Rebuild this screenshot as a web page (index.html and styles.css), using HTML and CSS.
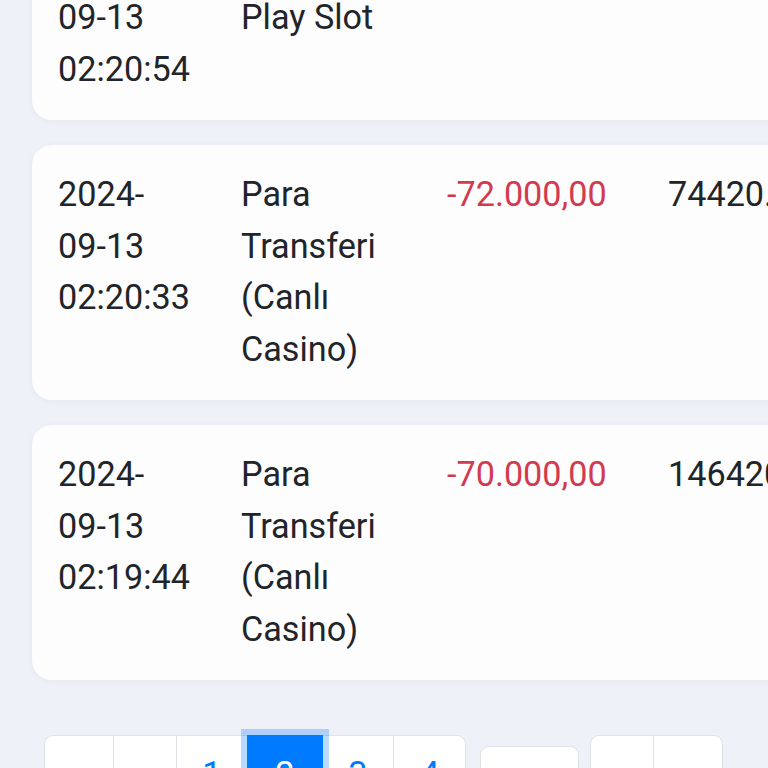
FILE: index.html
```html
<!DOCTYPE html>
<html lang="tr">
<head>
    <meta charset="UTF-8">
    <meta name="viewport" content="width=device-width, initial-scale=1.0">
    <title>Hesap Hareketleri</title>
    <link rel="stylesheet" href="styles.css">
</head>
<body>
    <div class="history">
        <div class="tx-card">
            <div class="tx-date">2024-<br>09-13<br>02:20:54</div>
            <div class="tx-desc">Pragmatic Play Slot</div>
            <div class="tx-amount">-2.000,00</div>
            <div class="tx-balance">72420.00</div>
        </div>

        <div class="tx-card">
            <div class="tx-date">2024-<br>09-13<br>02:20:33</div>
            <div class="tx-desc">Para Transferi (Canlı Casino)</div>
            <div class="tx-amount negative">-72.000,00</div>
            <div class="tx-balance">74420.00</div>
        </div>

        <div class="tx-card">
            <div class="tx-date">2024-<br>09-13<br>02:19:44</div>
            <div class="tx-desc">Para Transferi (Canlı Casino)</div>
            <div class="tx-amount negative">-70.000,00</div>
            <div class="tx-balance">146420.00</div>
        </div>

        <nav class="pager">
            <ul class="page-group">
                <li class="page-link">«</li>
                <li class="page-link">‹</li>
                <li class="page-link">1</li>
                <li class="page-link active">2</li>
                <li class="page-link">3</li>
                <li class="page-link">4</li>
            </ul>
            <div class="page-jump">...</div>
            <ul class="page-group">
                <li class="page-link">›</li>
                <li class="page-link">»</li>
            </ul>
        </nav>
    </div>
</body>
</html>
```

FILE: styles.css
```css
html, body { margin: 0; height: 100%; overflow: hidden; }
body { font-family: Roboto, "Liberation Sans", sans-serif; font-size: 34.2px; line-height: 51.4px; color: #212529; background: #eff1f8; }

/* page is scrolled down a little, so the first card starts above the fold */
.history { margin-top: -84px; padding-left: 32px; }

.tx-card { width: 900px; box-sizing: border-box; display: grid; grid-template-columns: 157px 180px 195px auto; column-gap: 26px; align-items: start; padding: 24.8px 26px; margin-bottom: 24.8px; background: #fdfdfe; border-radius: 20px; box-shadow: 0 1px 6px rgba(60, 70, 110, 0.06); }
.tx-amount { color: #000; }
.tx-amount.negative { color: #d23a4f; }
.tx-balance { white-space: nowrap; }

.pager { display: flex; align-items: flex-start; margin-top: 55px; padding-left: 12px; }
.page-group { display: flex; list-style: none; margin: 0; padding: 0; }
.page-link { padding: 17.2px 25.8px; border: 1px solid #dee2e6; margin-left: -1px; background: #fff; color: #007bff; line-height: 43px; position: relative; }
.page-group .page-link:first-child { margin-left: 0; border-radius: 9px 0 0 9px; }
.page-group .page-link:last-child { border-radius: 0 9px 9px 0; }
.page-link.active { padding: 17.2px 27px; background: #007bff; border-color: #007bff; color: #fff; z-index: 1; box-shadow: 0 0 0 6px rgba(0, 123, 255, 0.28); }
.page-jump { width: 99px; box-sizing: border-box; margin: 11px 11px 0 14px; padding: 17.2px 0; line-height: 43px; text-align: center; border: 1px solid #dee2e6; border-radius: 9px; background: #fff; color: #6c757d; }
```
